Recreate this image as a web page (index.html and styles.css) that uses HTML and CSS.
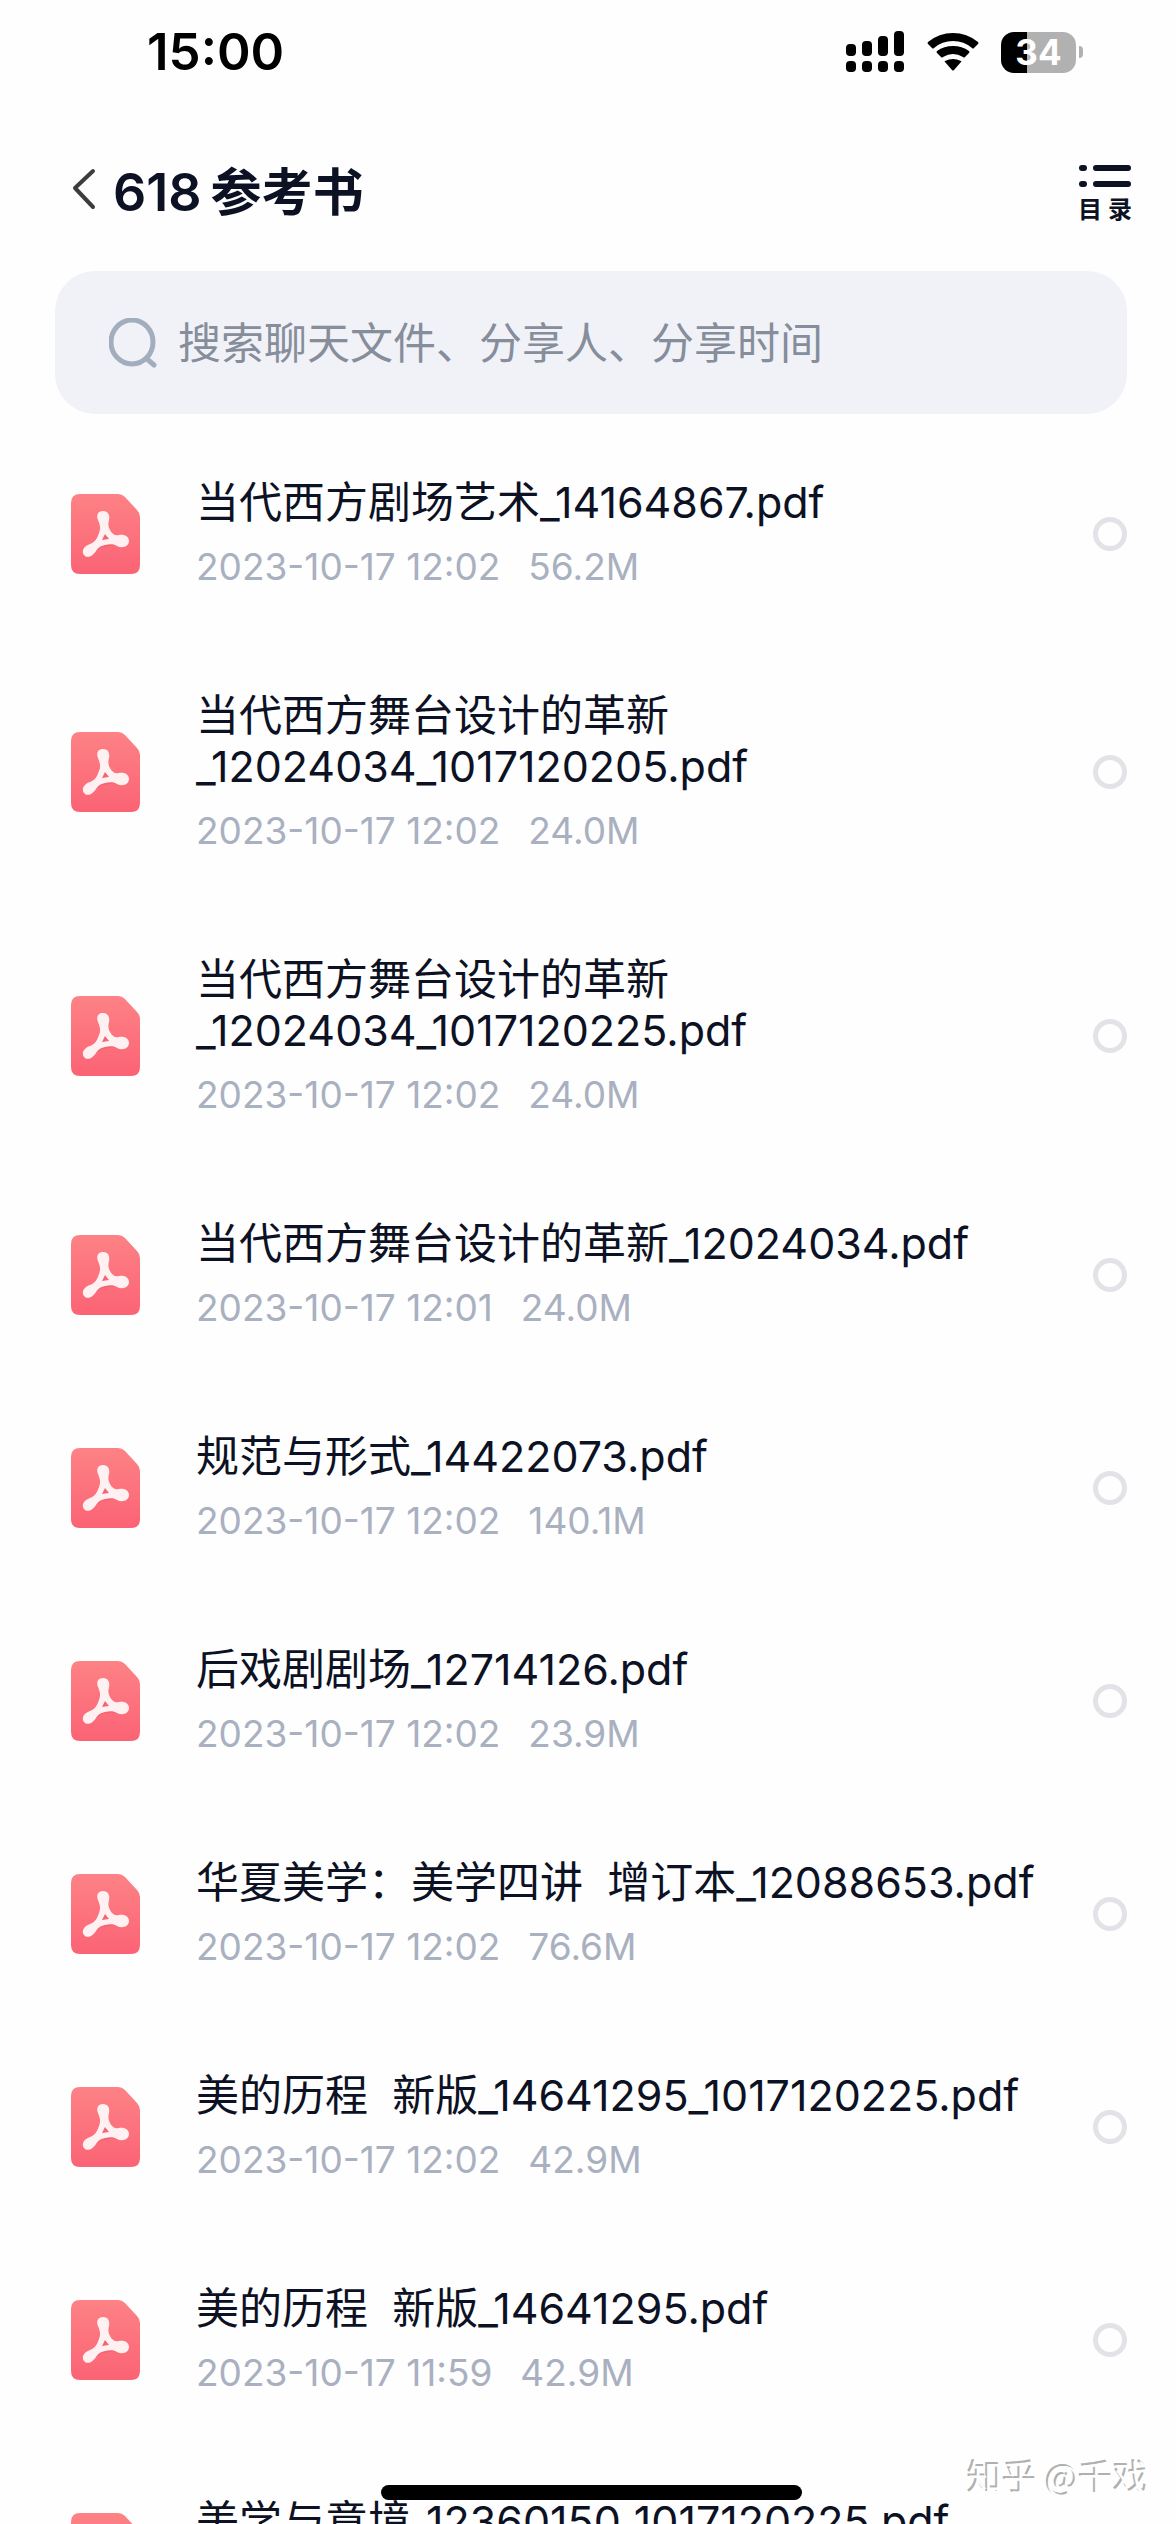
FILE: index.html
```html
<!DOCTYPE html>
<html lang="zh-CN">
<head>
<meta charset="utf-8">
<meta name="viewport" content="width=device-width, initial-scale=1">
<title>618参考书</title>
<link rel="stylesheet" href="styles.css">
</head>
<body>
<svg class="defs" width="0" height="0" aria-hidden="true">
  <defs>
    <linearGradient id="pdf-fill" x1="0" y1="0" x2="0" y2="1">
      <stop offset="0" stop-color="#fd8285"/>
      <stop offset="1" stop-color="#fb6375"/>
    </linearGradient>
    <symbol id="pdf" viewBox="0 0 69 80">
      <path fill="url(#pdf-fill)" d="M9 0H47Q51 0 54 3L66 16Q69 19 69 23V71Q69 80 60 80H9Q0 80 0 71V9Q0 0 9 0Z"/>
      <g fill="none" stroke="#d94860" stroke-opacity=".3" stroke-linecap="round" stroke-linejoin="round" transform="translate(1 2)">
        <path stroke-width="5" d="M32 24L34 36L40 47L28 49L34 36M40 47L51 47M28 49L18 57"/>
      </g>
      <path fill="#fff1f2" fill-rule="evenodd" d="M32 17C37 17 39 21 38 26C37 30 37 32 39 36C41 40 44 42 48 41C54 40 58 43 58 47C58 52 52 55 46 52C43 50 39 50 34 51C29 52 27 54 25 57C22 62 16 65 13 61C10 57 13 52 19 50C24 48 26 45 28 39C30 34 29 31 27 26C25 21 27 17 32 17ZM34 40L31 46L38 45Z"/>
    </symbol>
  </defs>
</svg>
<div class="app">
  <div class="status">
    <time class="clock">15:00</time>
    <div class="status-icons">
      <svg width="59" height="42" viewBox="0 0 59 42" role="img" aria-label="信号">
        <rect x="0" y="13" width="10" height="12" rx="4"/><rect x="16" y="10" width="10" height="15" rx="4"/><rect x="32" y="5" width="10" height="20" rx="4"/><rect x="48" y="0" width="10" height="25" rx="4"/>
        <rect x="0" y="30" width="10" height="11" rx="4"/><rect x="16" y="30" width="10" height="11" rx="4"/><rect x="32" y="30" width="10" height="11" rx="4"/><rect x="48" y="30" width="10" height="11" rx="4"/>
      </svg>
      <svg width="52" height="38" viewBox="0 0 52 38" role="img" aria-label="无线网络">
        <path d="M1 11Q0 10 1 9Q12 0 26 0T51 9Q52 10 51 11L47 15Q46 16 45 15Q37 8 26 8T7 15Q6 16 5 15ZM10 20Q9 19 10 18Q17 13 26 13T42 18Q43 19 42 20L38 24Q37 25 36 24Q31 21 26 21T16 24Q15 25 14 24ZM18 29Q17 28 18 28Q22 26 26 26T34 28Q35 28 34 29L27 37Q26 38 25 37Z"/>
      </svg>
      <div class="battery"><span class="battery-body">34</span><span class="battery-tip"></span></div>
    </div>
  </div>

  <header class="bar">
    <button class="back" type="button" aria-label="返回">
      <svg width="24" height="42" viewBox="0 0 24 42"><path d="M21 3L3 20L21 39" fill="none" stroke="#3c3c3e" stroke-width="4" stroke-linecap="round" stroke-linejoin="round"/></svg>
    </button>
    <h1 class="heading"><span>618</span><span class="heading-cjk">参考书</span></h1>
    <button class="toc" type="button">
      <svg width="54" height="23" viewBox="0 0 54 23" stroke="#0c1124" stroke-width="6" stroke-linecap="round"><path d="M4 3H6M18 3H50M4 19H6M18 19H50"/></svg>
      <span class="toc-label"><span>目</span><span>录</span></span>
    </button>
  </header>

  <label class="search">
    <svg width="49" height="50" viewBox="0 0 49 50" fill="none" stroke="#a2adbe" stroke-width="5" stroke-linecap="round" aria-hidden="true"><ellipse cx="23" cy="24" rx="21" ry="22"/><path d="M38 41L45 47"/></svg>
    <input type="search" aria-label="搜索" placeholder="搜索聊天文件、分享人、分享时间">
  </label>

  <ul class="files">
    <li><label class="file"><svg class="icon"><use href="#pdf"/></svg><span class="info"><span class="name">当代西方剧场艺术_14164867.pdf</span><span class="meta"><span>2023-10-17 12:02</span><span>56.2M</span></span></span><input type="radio" name="file"></label></li>
    <li><label class="file"><svg class="icon"><use href="#pdf"/></svg><span class="info"><span class="name">当代西方舞台设计的革新<br>_12024034_1017120205.pdf</span><span class="meta"><span>2023-10-17 12:02</span><span>24.0M</span></span></span><input type="radio" name="file"></label></li>
    <li><label class="file"><svg class="icon"><use href="#pdf"/></svg><span class="info"><span class="name">当代西方舞台设计的革新<br>_12024034_1017120225.pdf</span><span class="meta"><span>2023-10-17 12:02</span><span>24.0M</span></span></span><input type="radio" name="file"></label></li>
    <li><label class="file"><svg class="icon"><use href="#pdf"/></svg><span class="info"><span class="name">当代西方舞台设计的革新_12024034.pdf</span><span class="meta"><span>2023-10-17 12:01</span><span>24.0M</span></span></span><input type="radio" name="file"></label></li>
    <li><label class="file"><svg class="icon"><use href="#pdf"/></svg><span class="info"><span class="name">规范与形式_14422073.pdf</span><span class="meta"><span>2023-10-17 12:02</span><span>140.1M</span></span></span><input type="radio" name="file"></label></li>
    <li><label class="file"><svg class="icon"><use href="#pdf"/></svg><span class="info"><span class="name">后戏剧剧场_12714126.pdf</span><span class="meta"><span>2023-10-17 12:02</span><span>23.9M</span></span></span><input type="radio" name="file"></label></li>
    <li><label class="file"><svg class="icon"><use href="#pdf"/></svg><span class="info"><span class="name">华夏美学：美学四讲  增订本_12088653.pdf</span><span class="meta"><span>2023-10-17 12:02</span><span>76.6M</span></span></span><input type="radio" name="file"></label></li>
    <li><label class="file"><svg class="icon"><use href="#pdf"/></svg><span class="info"><span class="name">美的历程  新版_14641295_1017120225.pdf</span><span class="meta"><span>2023-10-17 12:02</span><span>42.9M</span></span></span><input type="radio" name="file"></label></li>
    <li><label class="file"><svg class="icon"><use href="#pdf"/></svg><span class="info"><span class="name">美的历程  新版_14641295.pdf</span><span class="meta"><span>2023-10-17 11:59</span><span>42.9M</span></span></span><input type="radio" name="file"></label></li>
    <li><label class="file"><svg class="icon"><use href="#pdf"/></svg><span class="info"><span class="name">美学与意境_12360150_1017120225.pdf</span></span><input type="radio" name="file"></label></li>
  </ul>

  <div class="home-indicator"></div>
  <div class="watermark">知乎 @千戏</div>
</div>
</body>
</html>
```
FILE: styles.css
```css
* {
  box-sizing: border-box;
}

body {
  margin: 0;
  background: #fefefe;
  color: #0c1124;
  font-family: Inter, "Noto Sans CJK SC", sans-serif;
}

button {
  padding: 0;
  border: 0;
  background: none;
  color: inherit;
  font: inherit;
}

svg {
  display: block;
  flex: none;
}

.defs {
  position: absolute;
}

.app {
  position: relative;
  display: flex;
  flex-direction: column;
  height: 100vh;
  overflow: hidden;
  padding: 0 49px 0 55px;
}

/* Status bar */
.status {
  display: flex;
  align-items: center;
  justify-content: space-between;
  height: 104px;
  flex: none;
  padding: 0 44px 0 92px;
  color: #000;
}

.clock {
  font-size: 51px;
  font-weight: 600;
  line-height: 64px;
}

.status-icons {
  display: flex;
  align-items: center;
  gap: 22px;
}

.battery {
  display: flex;
  align-items: center;
  gap: 3px;
}

.battery-body {
  width: 75px;
  border-radius: 13px;
  background: linear-gradient(90deg, #000 26px, #b1b1b1 26px);
  color: #fff;
  font-size: 35px;
  font-weight: 700;
  line-height: 41px;
  text-align: center;
}

.battery-tip {
  width: 4px;
  height: 12px;
  border-radius: 0 4px 4px 0;
  background: #b1b1b1;
}

/* Title bar */
.bar {
  display: flex;
  align-items: center;
  height: 167px;
  flex: none;
  padding: 10px 0 0 17px;
}

.back {
  padding-bottom: 8px;
}

.heading {
  display: flex;
  flex: 1;
  align-items: baseline;
  gap: 9px;
  margin: 0 0 0 17px;
  font-size: 52px;
  font-weight: 600;
  line-height: 64px;
}

.heading-cjk {
  font-size: 51px;
}

.toc {
  display: flex;
  flex-direction: column;
  gap: 8px;
  width: 54px;
  padding-top: 4px;
  margin-right: -5px;
}

.toc-label {
  display: flex;
  justify-content: space-between;
  align-self: stretch;
  font-size: 24px;
  font-weight: 700;
  line-height: 28px;
}

/* Search */
.search {
  display: flex;
  align-items: center;
  gap: 20px;
  height: 143px;
  flex: none;
  padding: 0 54px;
  border-radius: 40px;
  background: #f1f2f7;
}

.search input {
  flex: 1;
  min-width: 0;
  padding: 0;
  border: 0;
  outline: 0;
  background: none;
  color: inherit;
  font: inherit;
  font-size: 43px;
  line-height: 64px;
  appearance: none;
}

.search input::placeholder {
  color: #868d9b;
  opacity: 1;
}

/* File list */
.files {
  flex: 1;
  min-height: 0;
  overflow: hidden;
  margin: 0;
  padding: 13px 0 0 16px;
  list-style: none;
}

.file {
  display: flex;
  align-items: center;
  padding: 50px 0;
}

.icon {
  width: 69px;
  height: 80px;
}

.info {
  display: flex;
  flex: 1;
  flex-direction: column;
  gap: 15px;
  min-width: 0;
  min-height: 113px;
  padding-left: 56px;
}

.name {
  font-size: 43px;
  line-height: 51px;
  white-space: pre-wrap;
}

.meta {
  display: flex;
  gap: 28px;
  color: #a9b0c0;
  font-size: 37px;
  line-height: 47px;
}

.file input {
  width: 34px;
  height: 34px;
  flex: none;
  margin: 0;
  border: 5px solid #e3e3e7;
  border-radius: 50%;
  appearance: none;
}

.file input:checked {
  border-color: #fb6375;
}

/* Overlays */
.home-indicator {
  position: absolute;
  right: 374px;
  bottom: 24px;
  left: 381px;
  height: 15px;
  border-radius: 8px;
  background: #000;
}

.watermark {
  position: absolute;
  right: 27px;
  bottom: 24px;
  color: #fefefe;
  font-family: "Noto Sans CJK SC", sans-serif;
  font-size: 35px;
  line-height: 48px;
  text-shadow: -2px -2px 0 #b0b0b0;
}
```
